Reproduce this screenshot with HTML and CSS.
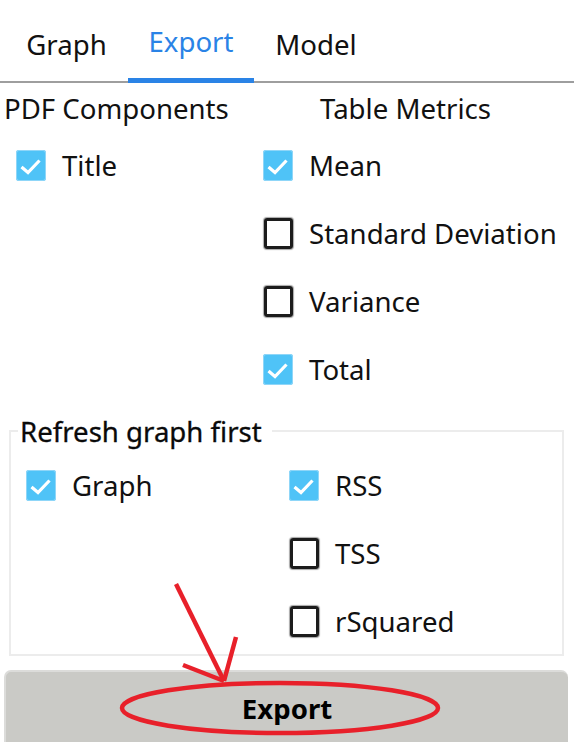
FILE: index.html
```
<!DOCTYPE html>
<html>
<head>
<meta charset="utf-8">
<link rel="stylesheet" href="styles.css">
</head>
<body>
<div class="page">
  <nav class="tabs">
    <div class="tab tab-first">Graph</div>
    <div class="tab active">Export</div>
    <div class="tab tab-last">Model</div>
  </nav>

  <div class="columns">
    <div class="col col-left">
      <div class="col-title">PDF Components</div>
      <label class="row"><span class="cb on"><svg viewBox="0 0 30 30"><polyline points="5.5,16.5 12,22 23.5,10"/></svg></span><span>Title</span></label>
    </div>
    <div class="col col-right">
      <div class="col-title title-right">Table Metrics</div>
      <label class="row"><span class="cb on"><svg viewBox="0 0 30 30"><polyline points="5.5,16.5 12,22 23.5,10"/></svg></span><span>Mean</span></label>
      <label class="row"><span class="cb off"></span><span>Standard Deviation</span></label>
      <label class="row"><span class="cb off"></span><span>Variance</span></label>
      <label class="row"><span class="cb on"><svg viewBox="0 0 30 30"><polyline points="5.5,16.5 12,22 23.5,10"/></svg></span><span>Total</span></label>
    </div>
  </div>

  <fieldset class="group">
    <legend>Refresh graph first</legend>
    <div class="group-cols">
      <div class="gcol gcol-left">
        <label class="row"><span class="cb on"><svg viewBox="0 0 30 30"><polyline points="5.5,16.5 12,22 23.5,10"/></svg></span><span>Graph</span></label>
      </div>
      <div class="gcol gcol-right">
        <label class="row"><span class="cb on"><svg viewBox="0 0 30 30"><polyline points="5.5,16.5 12,22 23.5,10"/></svg></span><span>RSS</span></label>
        <label class="row"><span class="cb off"></span><span>TSS</span></label>
        <label class="row"><span class="cb off"></span><span>rSquared</span></label>
      </div>
    </div>
  </fieldset>

  <button class="export-btn">Export</button>

  <svg class="annotation" width="574" height="742" viewBox="0 0 574 742">
    <line x1="176" y1="584" x2="224" y2="681"/>
    <line x1="183" y1="665" x2="224" y2="681"/>
    <line x1="236" y1="637" x2="224" y2="681"/>
    <ellipse cx="280" cy="708" rx="158" ry="25"/>
  </svg>
</div>
</body>
</html>
```
FILE: styles.css
```
* { box-sizing: border-box; }
html, body {
  margin: 0;
  padding: 0;
  background: #ffffff;
}
body {
  font-family: "Noto Sans", "Open Sans", sans-serif;
  font-size: 27.6px;
  color: #111111;
}
.page {
  position: relative;
  width: 574px;
  height: 742px;
  overflow: hidden;
}
.tabs {
  display: flex;
  height: 83px;
  border-bottom: 2px solid #9e9e9e;
}
.tab {
  width: 127px;
  text-align: center;
  padding-top: 22px;
  line-height: 44px;
  color: #111;
}
.tab-first {
  width: 128px;
  padding-left: 5px;
}
.tab-last {
  width: 124px;
}
.tab.active {
  width: 126px;
  color: #2a83e6;
  padding-top: 19px;
  border-bottom: 5px solid #2a83e6;
  margin-bottom: -2px;
}
.columns {
  display: flex;
}
.col-left {
  width: 250px;
  padding-left: 4px;
}
.col-right {
  flex: 1;
  padding-left: 13px;
}
.col-title {
  line-height: 46px;
  padding-top: 2px;
  white-space: nowrap;
}
.title-right {
  padding-left: 57px;
}
.col-left .row { padding-left: 12px; }
.row {
  display: flex;
  align-items: center;
  height: 68px;
  white-space: nowrap;
}
.row > span:last-child {
  margin-left: 16px;
}
.cb {
  width: 30px;
  height: 31px;
  border-radius: 3px;
  flex: none;
  display: block;
}
.cb.on {
  background: #4fc3f7;
  box-shadow: 0 0 0 1px #8fd6f8 inset;
}
.cb.on svg {
  display: block;
  width: 30px;
  height: 31px;
}
.cb.on polyline {
  fill: none;
  stroke: #ffffff;
  stroke-width: 3.2;
}
.cb.off {
  width: 29px;
  height: 31px;
  border: 3px solid #1c1c1c;
  box-shadow: 0 0 1px 1px rgba(0,0,0,0.35);
  margin-left: 1px;
}
.group {
  margin: 10px 10px 0 9px;
  border: 2px solid #ececec;
  padding: 0 0 0 15px;
  height: 243px;
}
.group legend {
  padding: 0 10px 0 2px;
  margin-left: -8px;
  line-height: 36px;
  font-size: 27.6px;
  color: #0a0a0a;
  -webkit-text-stroke: 0.3px #0a0a0a;
}
.group-cols {
  display: flex;
  margin-top: 2px;
}
.gcol-left { width: 263px; }
.gcol-right { flex: 1; }
.export-btn {
  display: block;
  margin: 14px 0 0 4px;
  width: 564px;
  height: 74px;
  border: none;
  border-top: 2px solid #dcdcda;
  border-left: 2px solid #dcdcda;
  border-radius: 7px 7px 0 0;
  background: #cacac6;
  font-family: "Noto Sans", "Open Sans", sans-serif;
  font-weight: bold;
  font-size: 27.6px;
  color: #000;
  text-align: center;
  padding: 0;
  line-height: 40px;
}
.annotation {
  position: absolute;
  left: 0;
  top: 0;
  pointer-events: none;
}
.annotation line, .annotation ellipse {
  fill: none;
  stroke: #e8202a;
  stroke-width: 4.5;
}
```
